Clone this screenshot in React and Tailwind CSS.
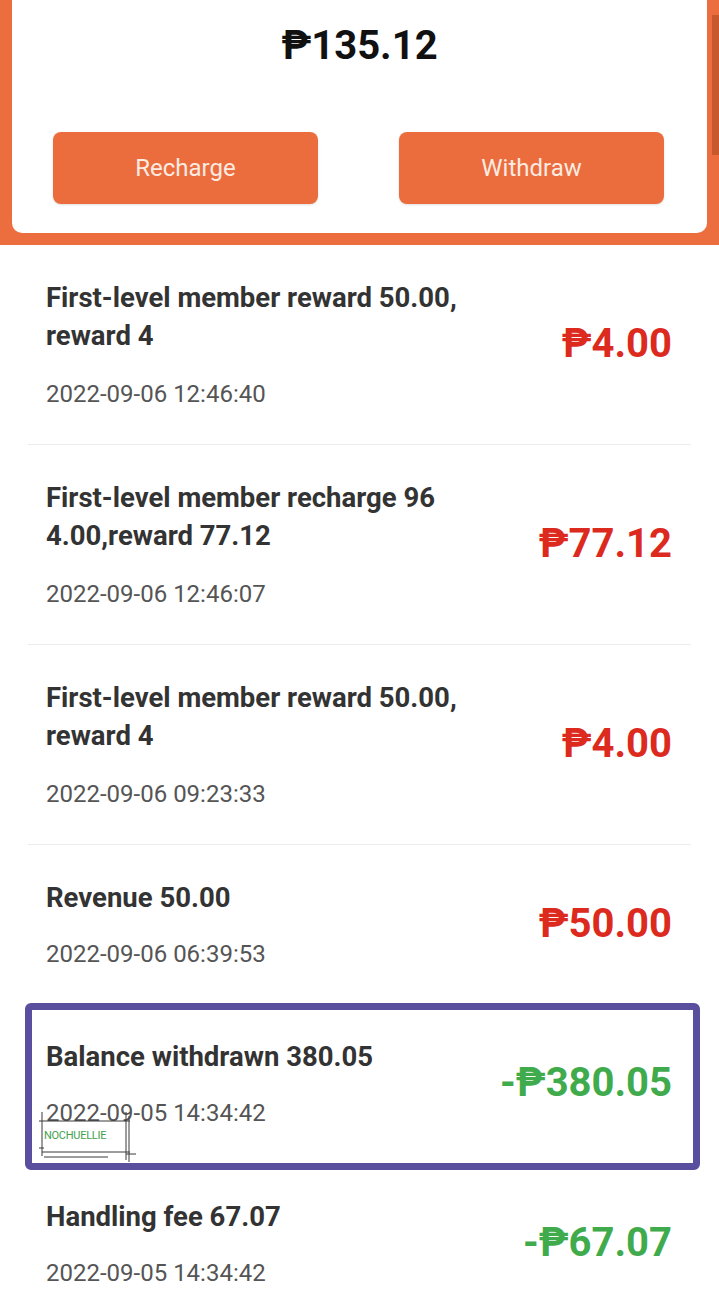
const records = [
  { title: ['First-level member reward 50.00,', 'reward 4'], date: '2022-09-06 12:46:40', amount: '₱4.00', out: false },
  { title: ['First-level member recharge 96', '4.00,reward 77.12'], date: '2022-09-06 12:46:07', amount: '₱77.12', out: false },
  { title: ['First-level member reward 50.00,', 'reward 4'], date: '2022-09-06 09:23:33', amount: '₱4.00', out: false },
  { title: ['Revenue 50.00'], date: '2022-09-06 06:39:53', amount: '₱50.00', out: false },
  { title: ['Balance withdrawn 380.05'], date: '2022-09-05 14:34:42', amount: '-₱380.05', out: true, marked: true },
  { title: ['Handling fee 67.07'], date: '2022-09-05 14:34:42', amount: '-₱67.07', out: true },
]

function Stamp() {
  return (
    <div className="absolute left-[10px] top-[106px] w-[100px] h-[52px]">
      <svg className="absolute inset-0" width="100" height="52" viewBox="0 0 100 52" fill="none" stroke="#3a3a3a" strokeWidth="1">
        <path d="M4 2 V46" />
        <path d="M1 11 H92" />
        <path d="M4 42 H92" />
        <path d="M6 47 H70" />
        <path d="M88 2 V50" />
        <path d="M91 6 V52" />
        <path d="M1 38 H6" />
        <path d="M88 44 H98" />
      </svg>
      <div className="absolute left-[6px] top-[19px] text-[11px] leading-[14px] text-[#3fa14e] tracking-tight font-['Roboto',sans-serif]">
        NOCHUELLIE
      </div>
    </div>
  )
}

function Row({ r, last }) {
  const single = r.title.length === 1
  return (
    <div className={`relative flex items-center justify-between pl-[18px] pr-[19px] pt-[34px] pb-[35px] ${last ? '' : 'border-b border-[#ececec]'}`}>
      <div>
        {r.title.map((t, i) => (
          <div key={i} className="text-[27.5px] leading-[38px] font-bold text-[#333333]">{t}</div>
        ))}
        <div className={`${single ? 'mt-[22px]' : 'mt-[24px]'} text-[24px] leading-[30px] text-[#555555]`}>{r.date}</div>
      </div>
      <div className={`text-[40px] font-bold leading-none ${r.out ? 'text-[#3fab4c]' : 'text-[#dc2a1e]'}`}>
        {r.amount}
      </div>
      {r.marked && (
        <>
          <div className="absolute -left-[3px] -right-[9px] -top-[1px] -bottom-[7px] border-[7px] border-[#5a4f9f] rounded-[6px] pointer-events-none" />
          <Stamp />
        </>
      )}
    </div>
  )
}

export default function App() {
  return (
    <div className="w-[719px] min-h-[1290px] bg-white font-['Roboto',sans-serif] overflow-hidden">
      <div className="relative bg-[#ec6e3e] px-[12px] pb-[12px]">
        <div className="bg-white rounded-b-[10px] pt-[22px] pb-[29px]">
          <div className="text-center text-[40px] leading-[48px] font-bold text-[#111111]">₱135.12</div>
          <div className="mt-[62px] flex justify-between pl-[41px] pr-[43px]">
            <button className="w-[265px] h-[72px] rounded-[8px] bg-[#eb6d3d] text-[24px] text-[#fcebe2] shadow-sm">Recharge</button>
            <button className="w-[265px] h-[72px] rounded-[8px] bg-[#eb6d3d] text-[24px] text-[#fcebe2] shadow-sm">Withdraw</button>
          </div>
        </div>
        <div className="absolute right-0 top-[15px] w-[7px] h-[140px] bg-[#c7592c]" />
      </div>
      <div className="px-[28px]">
        {records.map((r, i) => (
          <Row key={i} r={r} last={i === records.length - 1 || i === 3} />
        ))}
      </div>
    </div>
  )
}
